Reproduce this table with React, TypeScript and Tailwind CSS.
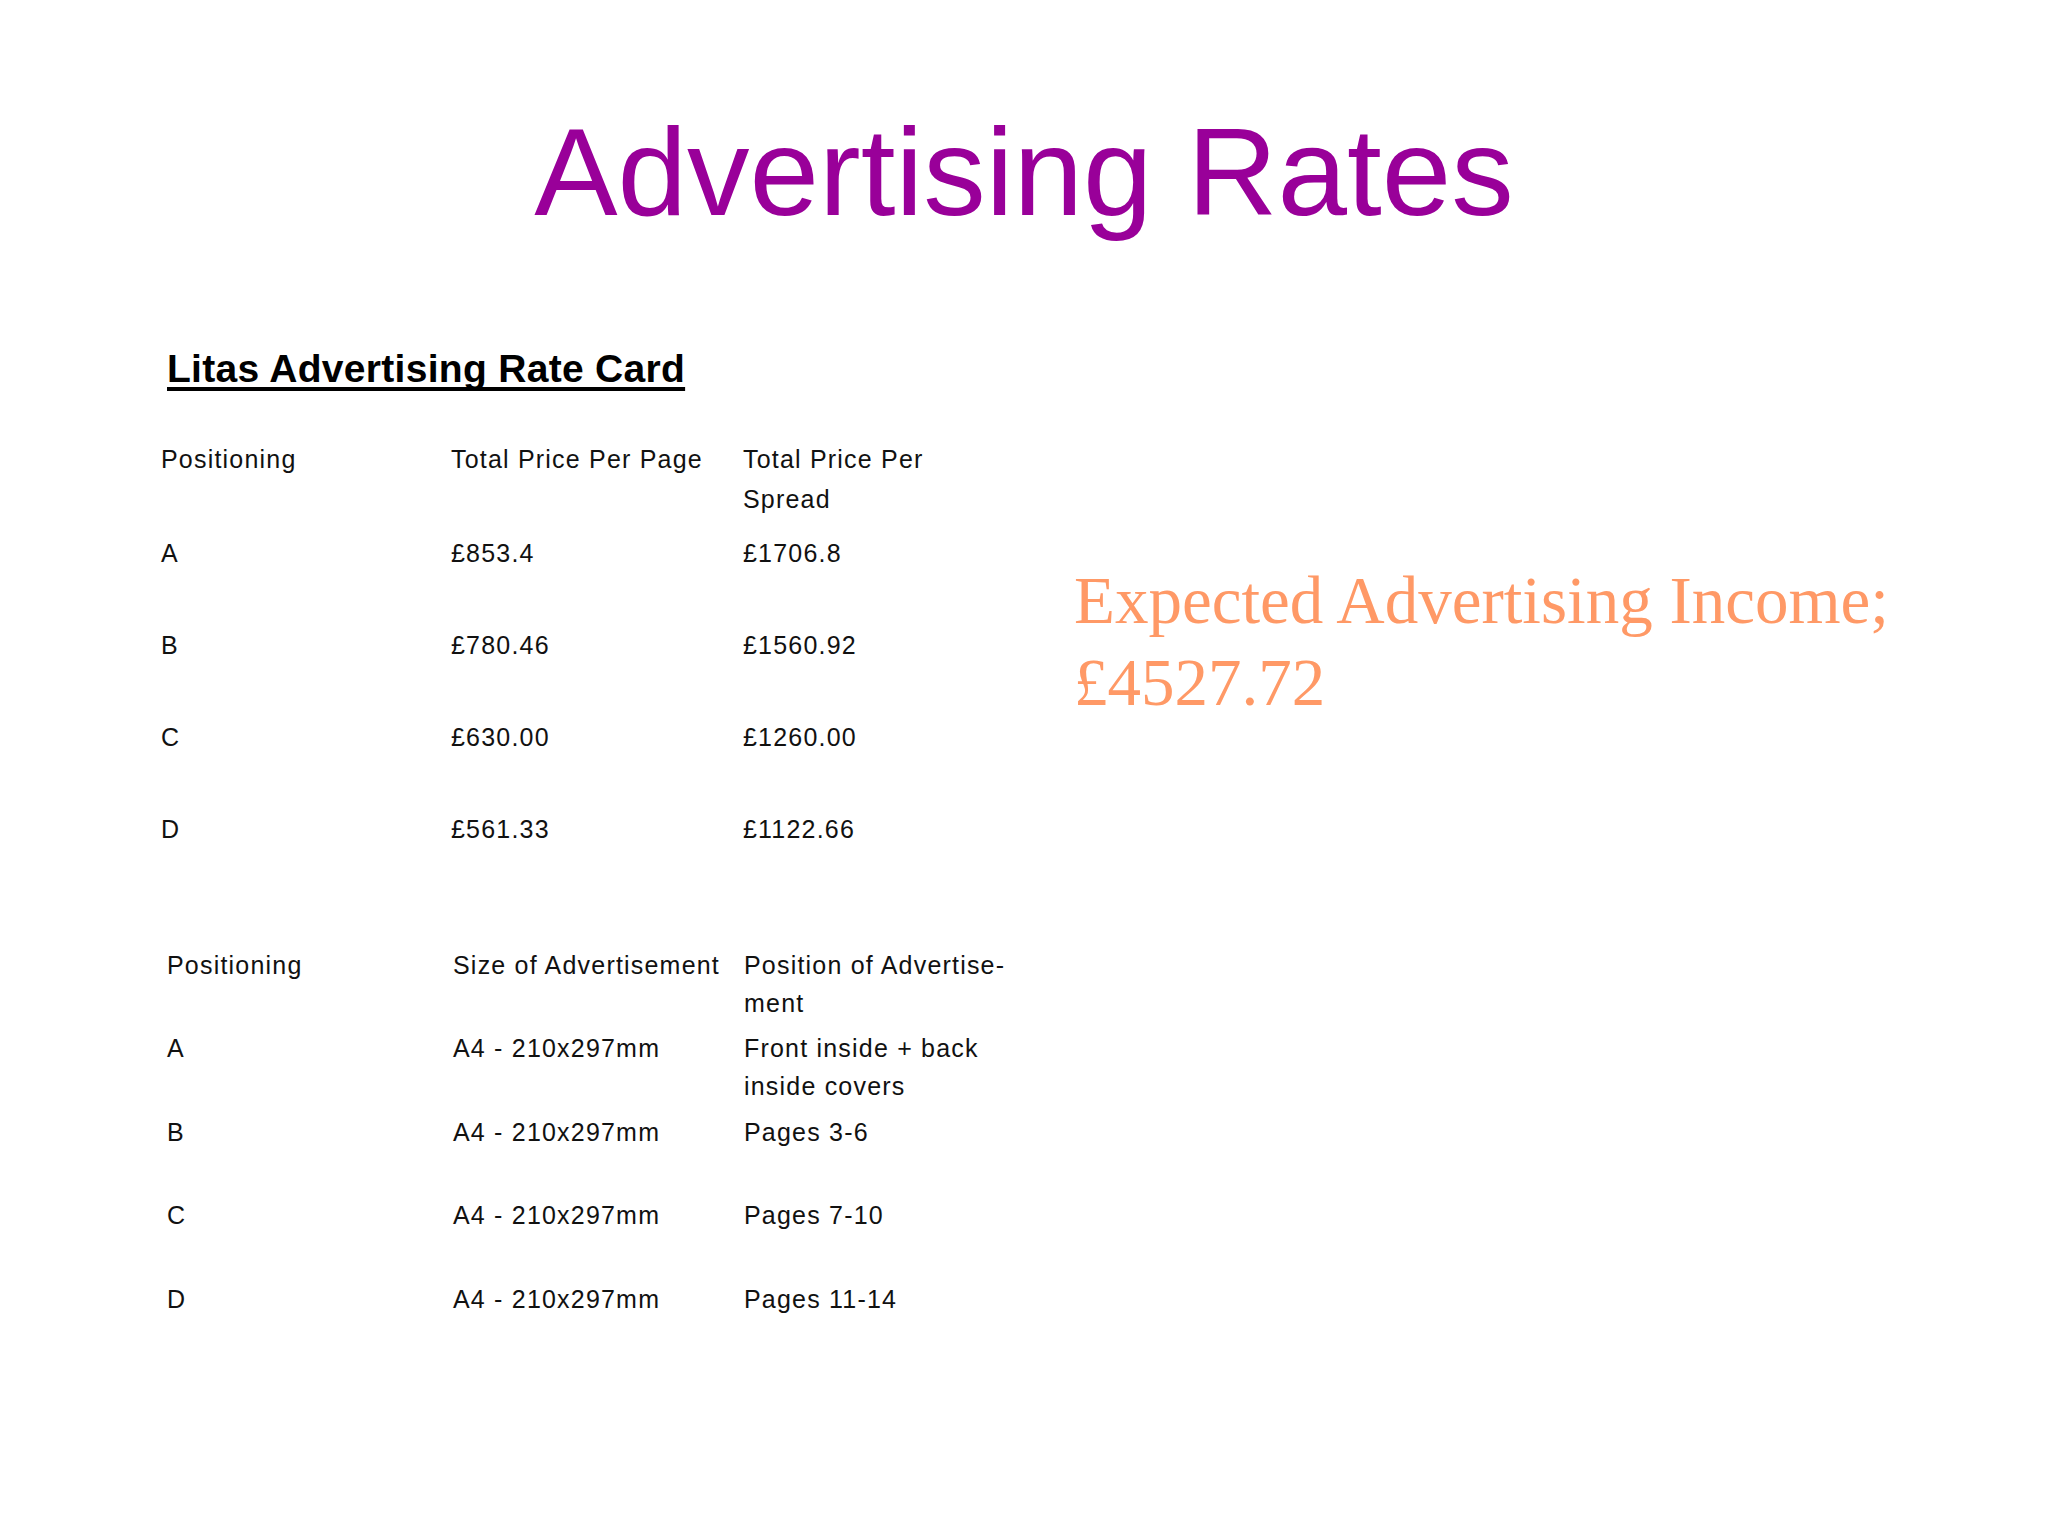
import React from "react";

const body = { fontFamily: '"Liberation Sans", Arial, sans-serif' } as const;

function Row1({ a, b, c, h = "h-[92px]" }: { a: React.ReactNode; b: React.ReactNode; c: React.ReactNode; h?: string }) {
  return (
    <div className={`flex ${h}`}>
      <div className="w-[290px] shrink-0">{a}</div>
      <div className="w-[292px] shrink-0">{b}</div>
      <div className="flex-1">{c}</div>
    </div>
  );
}

function Row2({ a, b, c, h = "h-[83px]" }: { a: React.ReactNode; b: React.ReactNode; c: React.ReactNode; h?: string }) {
  return (
    <div className={`flex ${h}`}>
      <div className="w-[286px] shrink-0">{a}</div>
      <div className="w-[291px] shrink-0 whitespace-nowrap">{b}</div>
      <div className="flex-1 whitespace-nowrap">{c}</div>
    </div>
  );
}

export default function App() {
  return (
    <div className="w-[2048px] h-[1536px] bg-white overflow-hidden text-black">
      <h1
        className="pt-[109px] text-center text-[125px] leading-none text-[#990099] font-normal"
        style={body}
      >
        Advertising Rates
      </h1>
      <div className="flex mt-[115px]">
        <div className="w-[1074px] shrink-0 pl-[161px]" style={body}>
          <div className="ml-[6px] text-[39px] leading-none font-bold tracking-[0.3px] underline decoration-[4px] underline-offset-[5px] [text-decoration-skip-ink:none]">
            Litas Advertising Rate Card
          </div>
          <div className="mt-[51px] text-[25px] leading-[40px] tracking-[1.2px] text-[#111]">
            <Row1
              h="h-[94px]"
              a="Positioning"
              b="Total Price Per Page"
              c={<>Total Price Per<br />Spread</>}
            />
            <Row1 a="A" b="£853.4" c="£1706.8" />
            <Row1 a="B" b="£780.46" c="£1560.92" />
            <Row1 a="C" b="£630.00" c="£1260.00" />
            <Row1 a="D" b="£561.33" c="£1122.66" />
          </div>
          <div className="mt-[45px] ml-[6px] text-[25px] leading-[38px] tracking-[1.2px] text-[#111]">
            <Row2 h="h-[83px]" a="Positioning" b="Size of Advertisement" c={<>Position of Advertise-<br />ment</>} />
            <Row2 h="h-[84px]" a="A" b="A4 - 210x297mm" c={<>Front inside + back<br />inside covers</>} />
            <Row2 h="h-[83px]" a="B" b="A4 - 210x297mm" c="Pages 3-6" />
            <Row2 h="h-[84px]" a="C" b="A4 - 210x297mm" c="Pages 7-10" />
            <Row2 a="D" b="A4 - 210x297mm" c="Pages 11-14" />
          </div>
        </div>
        <div
          className="mt-[210px] text-[67px] leading-[82px] text-[#FF9966] whitespace-nowrap"
          style={{ fontFamily: '"Liberation Serif", "Times New Roman", serif' }}
        >
          Expected Advertising Income;
          <br />
          £4527.72
        </div>
      </div>
    </div>
  );
}
